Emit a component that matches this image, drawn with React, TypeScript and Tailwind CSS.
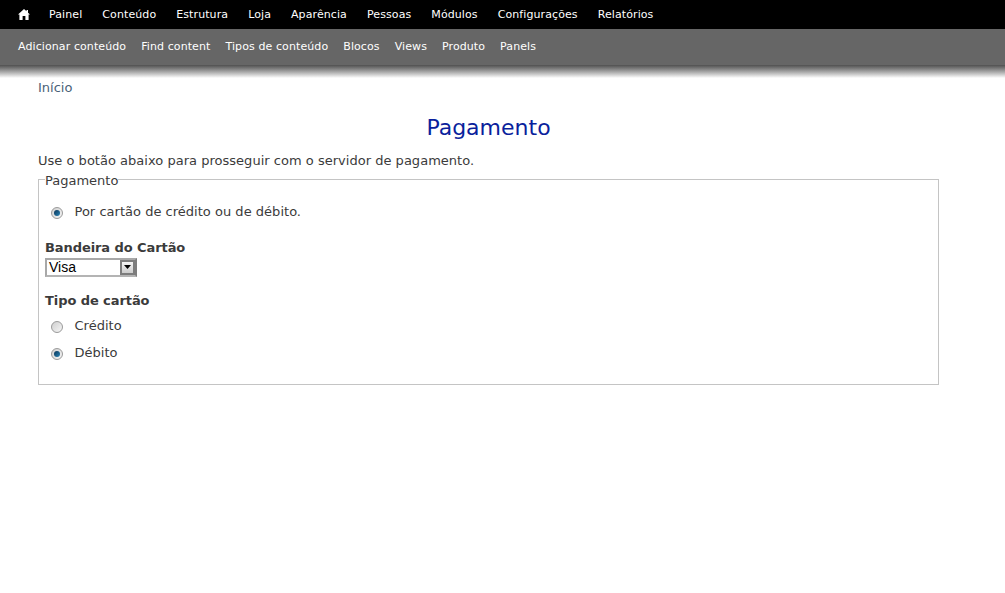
const primaryLinks = ["Painel", "Conteúdo", "Estrutura", "Loja", "Aparência", "Pessoas", "Módulos", "Configurações", "Relatórios"];
const shortcuts = ["Adicionar conteúdo", "Find content", "Tipos de conteúdo", "Blocos", "Views", "Produto", "Panels"];

function Radio({ checked }: { checked?: boolean }) {
  return (
    <span className="flex h-[12px] w-[12px] items-center justify-center rounded-full border border-[#9a9a9a] bg-gradient-to-br from-[#cfcfcf] to-[#f6f6f6]">
      {checked && <span className="h-[6px] w-[6px] rounded-full bg-gradient-to-br from-[#0b3558] to-[#2a86b8]" />}
    </span>
  );
}

function RadioRow({ label, checked, className }: { label: string; checked?: boolean; className?: string }) {
  return (
    <div className={`flex h-[16px] items-center ${className ?? ""}`}>
      <span className="ml-[6px] mr-[11.5px] mt-[3px]">
        <Radio checked={checked} />
      </span>
      <span className="tracking-[0.02px]">{label}</span>
    </div>
  );
}

export default function App() {
  return (
    <div className="min-h-[593px] bg-white font-['DejaVu_Sans',Verdana,sans-serif] text-[13px] text-[#3b3b3b]">
      <div className="flex h-[29px] items-center bg-black pl-[18px] text-[11px] tracking-[0.095px] text-white">
        <svg width="12" height="11" viewBox="0 0 12 11" className="mr-[19px] fill-white">
          <path d="M6 0 L8.5 2.3 L8.5 1 L10 1 L10 3.7 L12 5.6 L10.6 5.6 L10.6 11 L7.4 11 L7.4 7 L4.6 7 L4.6 11 L1.4 11 L1.4 5.6 L0 5.6 Z" />
        </svg>
        <div className="mt-[1px] flex gap-[20px]">
          {primaryLinks.map((l) => (
            <span key={l}>{l}</span>
          ))}
        </div>
      </div>
      <div className="flex h-[36px] items-center gap-[15px] bg-[#666666] pl-[18px] text-[11px] tracking-[0.095px] text-white">
        {shortcuts.map((l) => (
          <span key={l}>{l}</span>
        ))}
      </div>
      <div className="h-[13px] bg-gradient-to-b from-[#505050] to-white" />

      <div className="px-[38px] pr-[66px]">
        <div className="text-[#4a5f78]">Início</div>
        <h1 className="mt-[17px] text-center text-[22px] font-normal leading-[26px] text-[#0a1f9c]">Pagamento</h1>
        <p className="mt-[12px] leading-[16px] tracking-[0.02px]">Use o botão abaixo para prosseguir com o servidor de pagamento.</p>

        <fieldset className="mt-[3px] h-[213px] border border-[#c4c4c4] px-[6px]">
          <legend className="mt-[1px] leading-[16px]">
            <span className="relative top-[1px]">Pagamento</span>
          </legend>
          <RadioRow label="Por cartão de crédito ou de débito." checked className="mt-[16px]" />
          <div className="mt-[20px] font-bold leading-[16px] tracking-[-0.08px]">Bandeira do Cartão</div>
          <div className="mt-[2px] flex h-[19px] w-[92px] items-center justify-between border-2 border-t-[#a8a8a8] border-r-[#7d7d7d] border-b-[#b4b4b4] border-l-[#a8a8a8] bg-white pl-[2px] font-['Liberation_Sans',Arial,sans-serif] text-[14px] text-black">
            <span>Visa</span>
            <span className="flex h-[15px] w-[15px] items-center justify-center border-2 border-[#7d7d7d] bg-gradient-to-b from-[#f4f4f4] to-[#cdcdcd]">
              <svg width="7" height="4" viewBox="0 0 7 4" className="fill-black">
                <path d="M0 0 H7 L3.5 4 Z" />
              </svg>
            </span>
          </div>
          <div className="mt-[16px] font-bold leading-[16px] tracking-[-0.08px]">Tipo de cartão</div>
          <RadioRow label="Crédito" className="mt-[9px]" />
          <RadioRow label="Débito" checked className="mt-[11px]" />
        </fieldset>
      </div>
    </div>
  );
}
